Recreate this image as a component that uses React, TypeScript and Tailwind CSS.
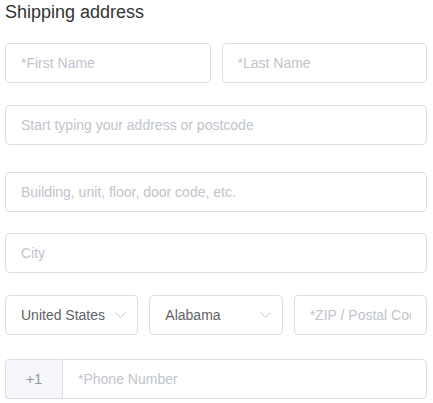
import React from "react";

const inputCls =
  "block w-full h-[40px] rounded-[4px] border border-[#dcdfe6] bg-white px-[15px] text-[14px] text-[#606266] placeholder:text-[#c0c4cc] outline-none";

function Chevron() {
  return (
    <svg width="11" height="6" viewBox="0 0 11 6" fill="none" className="shrink-0">
      <path d="M0.5 0.5 L5.5 5.5 L10.5 0.5" stroke="#c0c4cc" strokeWidth="1" />
    </svg>
  );
}

function Select({ value }: { value: string }) {
  return (
    <div className="flex h-[40px] items-center justify-between rounded-[4px] border border-[#dcdfe6] bg-white pl-[15px] pr-[11px] text-[14px] text-[#606266]">
      <span>{value}</span>
      <Chevron />
    </div>
  );
}

export default function App() {
  return (
    <div
      className="w-[433px] h-[403px] bg-white"
      style={{ fontFamily: '"Liberation Sans", Arial, sans-serif' }}
    >
      <div className="ml-[5px] w-[422px]">
        <div className="text-[18px] leading-[24px] text-[#333333] mb-[19px]">Shipping address</div>
        <div className="grid grid-cols-2 gap-[11px]">
          <input className={inputCls} placeholder="*First Name" />
          <input className={inputCls} placeholder="*Last Name" />
        </div>
        <div className="mt-[22px]">
          <input className={inputCls} placeholder="Start typing your address or postcode" />
        </div>
        <div className="mt-[27px]">
          <input className={inputCls} placeholder="Building, unit, floor, door code, etc." />
        </div>
        <div className="mt-[21px]">
          <input className={inputCls} placeholder="City" />
        </div>
        <div className="mt-[22px] grid grid-cols-3 gap-[11px]">
          <Select value="United States" />
          <Select value="Alabama" />
          <input className={inputCls} placeholder="*ZIP / Postal Code" />
        </div>
        <div className="mt-[24px] flex h-[40px]">
          <div className="flex w-[57px] shrink-0 items-center justify-center rounded-l-[4px] border border-r-0 border-[#dcdfe6] bg-[#f5f7fa] text-[14px] text-[#909399]">
            +1
          </div>
          <input
            className="block h-[40px] min-w-0 flex-1 rounded-r-[4px] border border-[#dcdfe6] bg-white px-[15px] text-[14px] text-[#606266] placeholder:text-[#c0c4cc] outline-none"
            placeholder="*Phone Number"
          />
        </div>
      </div>
    </div>
  );
}
